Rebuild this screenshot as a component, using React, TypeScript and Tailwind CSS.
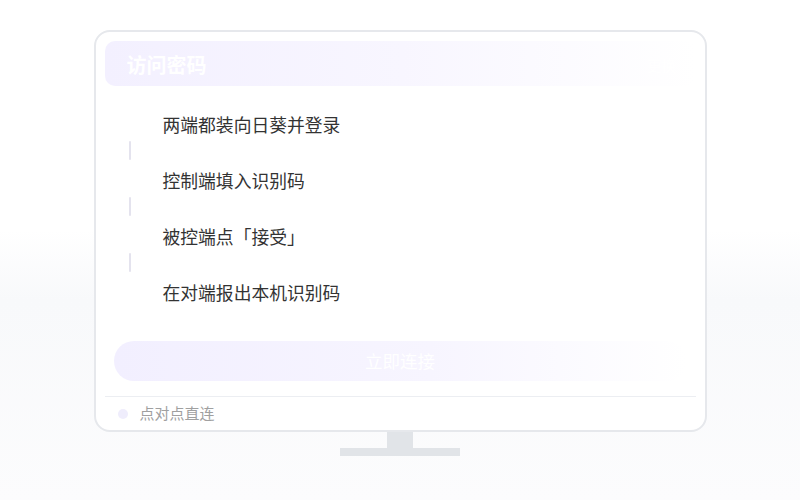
const steps = ['两端都装向日葵并登录', '控制端填入识别码', '被控端点「接受」', '在对端报出本机识别码'];

export default function App() {
  return (
    <div
      className="w-[800px] h-[500px] flex flex-col items-center bg-gradient-to-b from-white from-[46%] via-[#f8f9fb] via-[60%] to-[#fcfcfd]"
      style={{ fontFamily: '"Noto Sans CJK SC", "Noto Sans", sans-serif' }}
    >
      {/* monitor */}
      <div className="mt-[30px] w-[613px] h-[402px] rounded-[16px] border-2 border-[#e6e8ec] bg-white flex flex-col px-[9px] pt-[9px]">
        <div className="h-[45px] shrink-0 rounded-[10px] bg-gradient-to-r from-[#f3f0ff] via-[#f8f6ff] to-white flex items-center justify-between pl-[22px] pr-[20px] pt-[3px]">
          <span className="text-[20px] font-bold text-white">访问密码</span>
          <span className="text-[14px] text-white/80">更换</span>
        </div>

        <div className="flex flex-col pt-[26px]">
          {steps.map((s, i) => (
            <div key={s} className="flex flex-col">
              <div className="h-[24px] flex items-center pl-[58px] text-[17.8px] text-[#333] leading-[24px]">{s}</div>
              {i < steps.length - 1 && (
                <div className="h-[32px] pt-[5px] pb-[8px] pl-[24px]">
                  <div className="w-[2px] h-full bg-[#e4e3ee] rounded-full" />
                </div>
              )}
            </div>
          ))}
        </div>

        <div className="mt-[37px] mx-[9px] h-[40px] shrink-0 rounded-full bg-gradient-to-r from-[#f2efff] via-[#f7f5ff] via-[55%] to-white flex items-center justify-center">
          <span className="text-[17.5px] text-white">立即连接</span>
        </div>

        <div className="mt-[15px] border-t border-[#eceef2] flex-1 flex items-center gap-[12px] pl-[13px]">
          <span className="w-[10px] h-[10px] rounded-full bg-[#efedfc]" />
          <span className="text-[15px] text-[#a0a0a0]">点对点直连</span>
        </div>
      </div>

      {/* stand */}
      <div className="w-[26px] h-[16px] bg-[#e1e4e8]" />
      <div className="w-[120px] h-[8px] bg-[#e1e4e8]" />
    </div>
  );
}
